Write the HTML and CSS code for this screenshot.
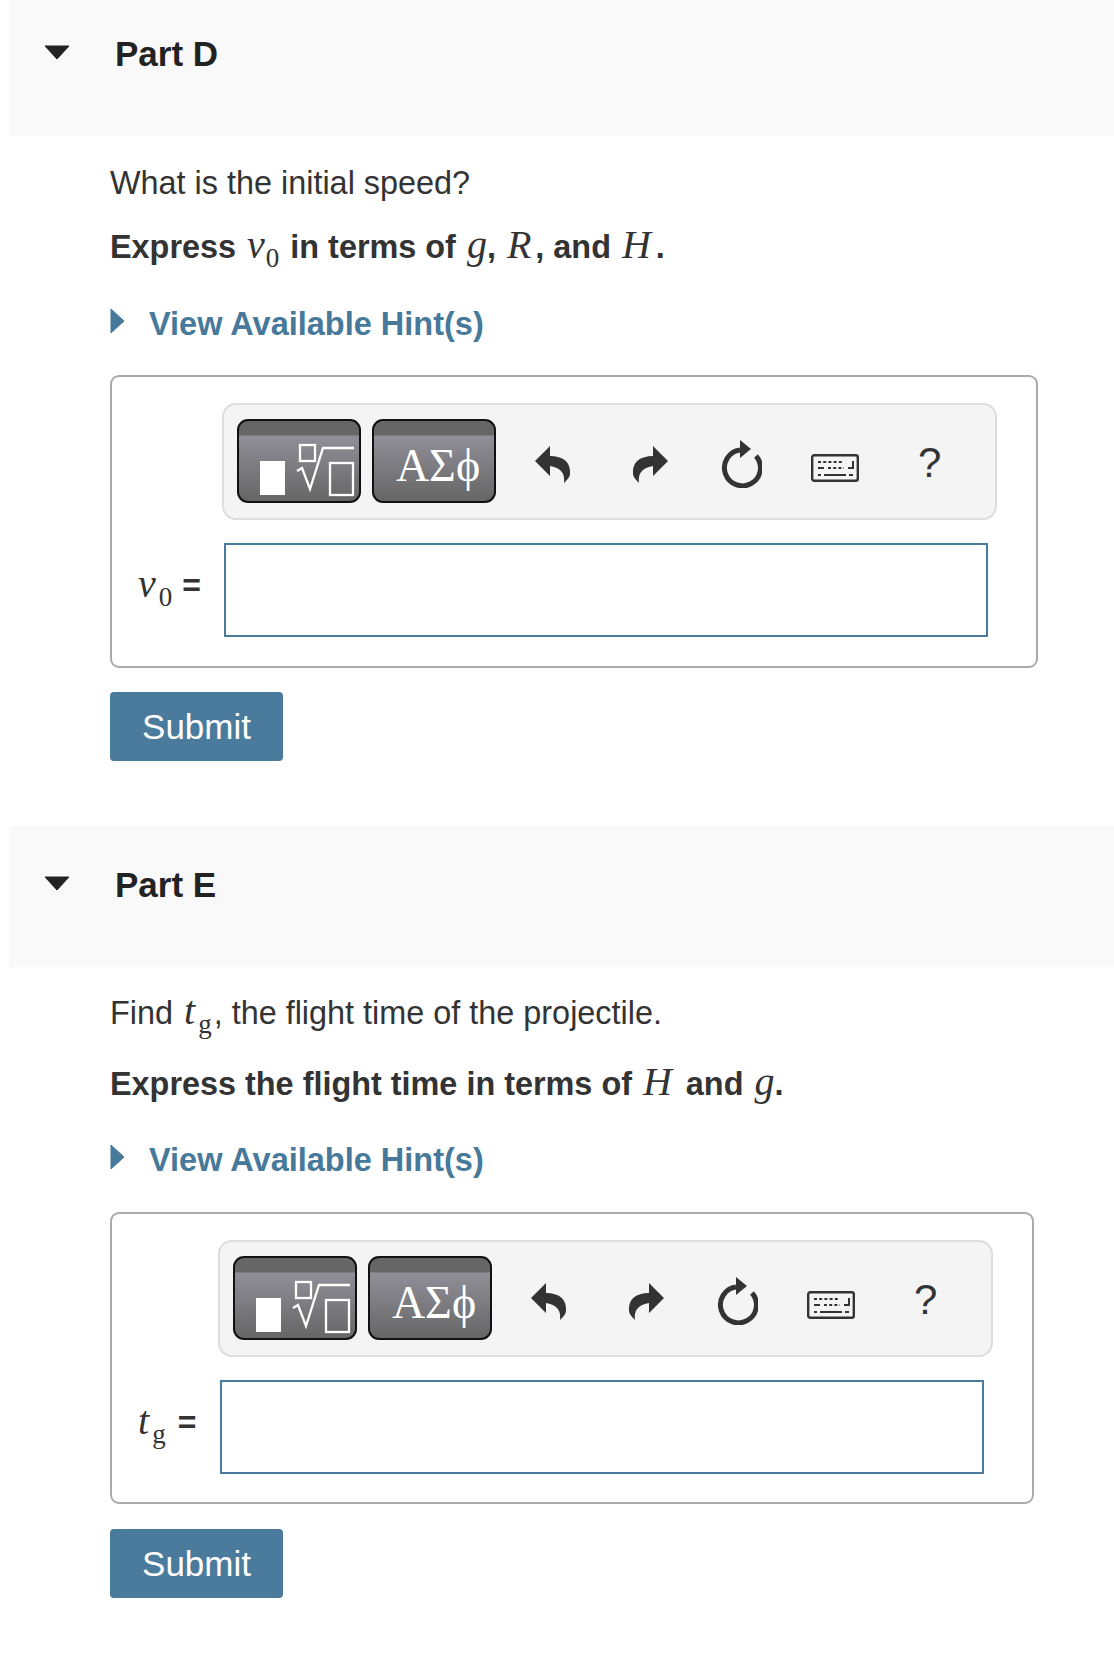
FILE: index.html
```html
<!DOCTYPE html>
<html lang="en">

<head>
    <meta charset="UTF-8">
    <meta name="viewport" content="width=device-width, initial-scale=1.0">
    <title>Parts D and E</title>
    <link rel="stylesheet" href="styles.css">
</head>

<body>
    <div class="page">
        <section class="part partD">
            <div class="partHead">
                <svg class="caret" width="26" height="15" viewBox="0 0 26 15"><path d="M1 1H25L13 14Z" fill="#222" stroke="#222" stroke-linejoin="round"/></svg>
                <h2>Part D</h2>
            </div>
            <div class="partBody">
                <p class="question">What is the initial speed?</p>
                <p class="instruction">Express <span class="math">v<sub>0</sub></span> in terms of <span class="math mathG">g</span>, <span class="math mathR">R</span>, and <span class="math mathH">H</span>.</p>
                <div class="hints">
                    <svg width="15" height="26" viewBox="0 0 15 26"><path d="M1 1L14 13L1 25Z" fill="#47799b" stroke="#47799b" stroke-linejoin="round"/></svg>
                    <a>View Available Hint(s)</a>
                </div>
                <div class="answerBox">
                    <div class="toolbar">
                        <button class="tplBtn"><svg width="120" height="80" viewBox="2 2 120 80"><rect x="23" y="42" width="25" height="34" fill="#fff"/><g fill="none" stroke="#fff" stroke-width="2.3"><rect x="63" y="26" width="15" height="16"/><path d="M60 52L65 49L73 70L86 29H117"/><rect x="93" y="44" width="23" height="32"/></g></svg></button>
                        <button class="tplBtn symBtn">ΑΣϕ</button>
                        <svg class="icon undo" width="36" height="42" viewBox="0 0 36 42"><path d="M0 20L15 5V15C28 15 36 21 35 33C35 36 32 39 29 42C30 33 27 27 15 25V35Z" fill="#333"/></svg>
                        <svg class="icon redo" width="36" height="42" viewBox="0 0 36 42"><path d="M36 20L21 5V15C8 15 0 21 1 33C1 36 4 39 7 42C6 33 9 27 21 25V35Z" fill="#333"/></svg>
                        <svg class="icon reload" width="42" height="48" viewBox="0 0 42 48"><path d="M20 10A18 18 0 1 0 36 16" fill="none" stroke="#333" stroke-width="5"/><path d="M20 0L31 9L20 18Z" fill="#333"/></svg>
                        <svg class="icon keys" width="48" height="28" viewBox="0 0 48 28"><rect x="1.2" y="1.2" width="45.6" height="25.6" rx="2" fill="none" stroke="#333" stroke-width="2.4"/><g fill="none" stroke="#333" stroke-width="2"><path d="M7 8H33M17 14H33" stroke-dasharray="3 2.2"/><path d="M7 14H13M37 14H42V7M7 21H10M13 21H35M38 21H42"/></g></svg>
                        <span class="helpMark">?</span>
                    </div>
                    <div class="answerRow">
                        <label class="math">v<sub>0</sub> <span class="eq">=</span></label>
                        <input type="text">
                    </div>
                </div>
                <button class="submitBtn">Submit</button>
            </div>
        </section>

        <section class="part partE">
            <div class="partHead">
                <svg class="caret" width="26" height="15" viewBox="0 0 26 15"><path d="M1 1H25L13 14Z" fill="#222" stroke="#222" stroke-linejoin="round"/></svg>
                <h2>Part E</h2>
            </div>
            <div class="partBody">
                <p class="question">Find <span class="math">t<sub>g</sub></span>, the flight time of the projectile.</p>
                <p class="instruction">Express the flight time in terms of <span class="math mathH">H</span> and <span class="math mathG">g</span>.</p>
                <div class="hints">
                    <svg width="15" height="26" viewBox="0 0 15 26"><path d="M1 1L14 13L1 25Z" fill="#47799b" stroke="#47799b" stroke-linejoin="round"/></svg>
                    <a>View Available Hint(s)</a>
                </div>
                <div class="answerBox">
                    <div class="toolbar">
                        <button class="tplBtn"><svg width="120" height="80" viewBox="2 2 120 80"><rect x="23" y="42" width="25" height="34" fill="#fff"/><g fill="none" stroke="#fff" stroke-width="2.3"><rect x="63" y="26" width="15" height="16"/><path d="M60 52L65 49L73 70L86 29H117"/><rect x="93" y="44" width="23" height="32"/></g></svg></button>
                        <button class="tplBtn symBtn">ΑΣϕ</button>
                        <svg class="icon undo" width="36" height="42" viewBox="0 0 36 42"><path d="M0 20L15 5V15C28 15 36 21 35 33C35 36 32 39 29 42C30 33 27 27 15 25V35Z" fill="#333"/></svg>
                        <svg class="icon redo" width="36" height="42" viewBox="0 0 36 42"><path d="M36 20L21 5V15C8 15 0 21 1 33C1 36 4 39 7 42C6 33 9 27 21 25V35Z" fill="#333"/></svg>
                        <svg class="icon reload" width="42" height="48" viewBox="0 0 42 48"><path d="M20 10A18 18 0 1 0 36 16" fill="none" stroke="#333" stroke-width="5"/><path d="M20 0L31 9L20 18Z" fill="#333"/></svg>
                        <svg class="icon keys" width="48" height="28" viewBox="0 0 48 28"><rect x="1.2" y="1.2" width="45.6" height="25.6" rx="2" fill="none" stroke="#333" stroke-width="2.4"/><g fill="none" stroke="#333" stroke-width="2"><path d="M7 8H33M17 14H33" stroke-dasharray="3 2.2"/><path d="M7 14H13M37 14H42V7M7 21H10M13 21H35M38 21H42"/></g></svg>
                        <span class="helpMark">?</span>
                    </div>
                    <div class="answerRow">
                        <label class="math">t<sub>g</sub> <span class="eq">=</span></label>
                        <input type="text">
                    </div>
                </div>
                <button class="submitBtn">Submit</button>
            </div>
        </section>
    </div>
</body>

</html>
```

FILE: styles.css
```css
* {
    margin: 0;
    padding: 0;
    box-sizing: border-box;
}

body {
    font-family: "Liberation Sans", Arial, sans-serif;
    color: #333;
    background-color: white;
    overflow: hidden;
}

.page {
    margin-top: -5px;
    margin-left: 9px;
}

.part {
    height: 831px;
}

.partHead {
    display: flex;
    align-items: flex-start;
    height: 141px;
    background-color: #f9f9f9;
    padding: 50px 0 0 35px;
}

.partHead h2 {
    font-size: 35px;
    line-height: 35px;
    margin: -9px 0 0 45px;
    color: #222;
}

.partBody {
    padding-left: 101px;
}

.question {
    font-size: 32.4px;
    line-height: 40px;
    padding-top: 27px;
}

.partE .question {
    padding-top: 26px;
}

.instruction {
    font-size: 32.4px;
    line-height: 40px;
    font-weight: bold;
    margin-top: 24px;
}

.partE .instruction {
    margin-top: 31px;
}

.math {
    font-family: "Liberation Serif", "Times New Roman", serif;
    font-style: italic;
    font-weight: normal;
    font-size: 40px;
    line-height: 0;
    padding: 0 2px;
}

.mathG {
    padding-right: 0;
}

.mathR {
    padding-right: 4px;
}

.mathH {
    padding-right: 5px;
}

.math sub {
    font-style: normal;
    font-size: 27px;
    line-height: 0;
    margin-left: 3px;
}

.instruction .math sub {
    margin-left: 1px;
}

.hints {
    display: flex;
    align-items: center;
    margin-top: 37px;
    height: 40px;
    color: #47799b;
    font-size: 32.5px;
    font-weight: bold;
}

.partE .hints {
    margin-top: 36px;
}

.hints svg {
    margin-right: 24px;
    margin-top: -6px;
}

.answerBox {
    width: 928px;
    height: 293px;
    margin-top: 31px;
    border: 2px solid #aaa;
    border-radius: 9px;
    padding-top: 26px;
}

.partE .answerBox {
    width: 924px;
    height: 292px;
    margin-top: 32px;
}

.toolbar {
    display: flex;
    align-items: center;
    width: 775px;
    height: 117px;
    margin-left: 110px;
    background-color: #f4f4f4;
    border: 2px solid #ddd;
    border-radius: 14px;
    padding-left: 13px;
}

.partE .toolbar {
    margin-left: 106px;
}

.tplBtn {
    width: 124px;
    height: 84px;
    margin-top: -1px;
    margin-right: 11px;
    border: 2px solid #111;
    border-radius: 11px;
    background: linear-gradient(#666 0, #666 14px, #908f98 15px, #666 100%);
    overflow: hidden;
}

.tplBtn svg {
    display: block;
}

.symBtn {
    font-family: "Liberation Serif", "Times New Roman", serif;
    font-size: 46px;
    line-height: 46px;
    color: white;
    padding-top: 10px;
    padding-left: 8px;
}

.icon {
    flex: none;
}

.undo {
    margin-left: 28px;
}

.redo {
    margin-left: 61px;
}

.reload {
    margin-left: 52px;
    margin-top: 4px;
}

.keys {
    margin-left: 49px;
    margin-top: 12px;
}

.helpMark {
    margin-left: 59px;
    margin-top: 2px;
    font-size: 42px;
}

.answerRow {
    display: flex;
    align-items: center;
    margin-top: 23px;
    padding-left: 24px;
}

.answerRow label {
    width: 88px;
    white-space: nowrap;
}

.partE .answerRow label {
    width: 84px;
}

.eq {
    font-family: "Liberation Sans", Arial, sans-serif;
    font-style: normal;
    font-size: 32px;
    font-weight: bold;
    color: #333;
    vertical-align: 1px;
}

.partE .eq {
    margin-left: 2px;
}

.answerRow input {
    width: 764px;
    height: 94px;
    border: 2px solid #4a7a9c;
    background-color: white;
}

.submitBtn {
    display: block;
    width: 173px;
    height: 69px;
    margin-top: 24px;
    background-color: #4a7a9c;
    color: white;
    border: none;
    border-radius: 4px;
    font-family: "Liberation Sans", Arial, sans-serif;
    font-size: 35px;
}

.partE .submitBtn {
    margin-top: 25px;
}
```
